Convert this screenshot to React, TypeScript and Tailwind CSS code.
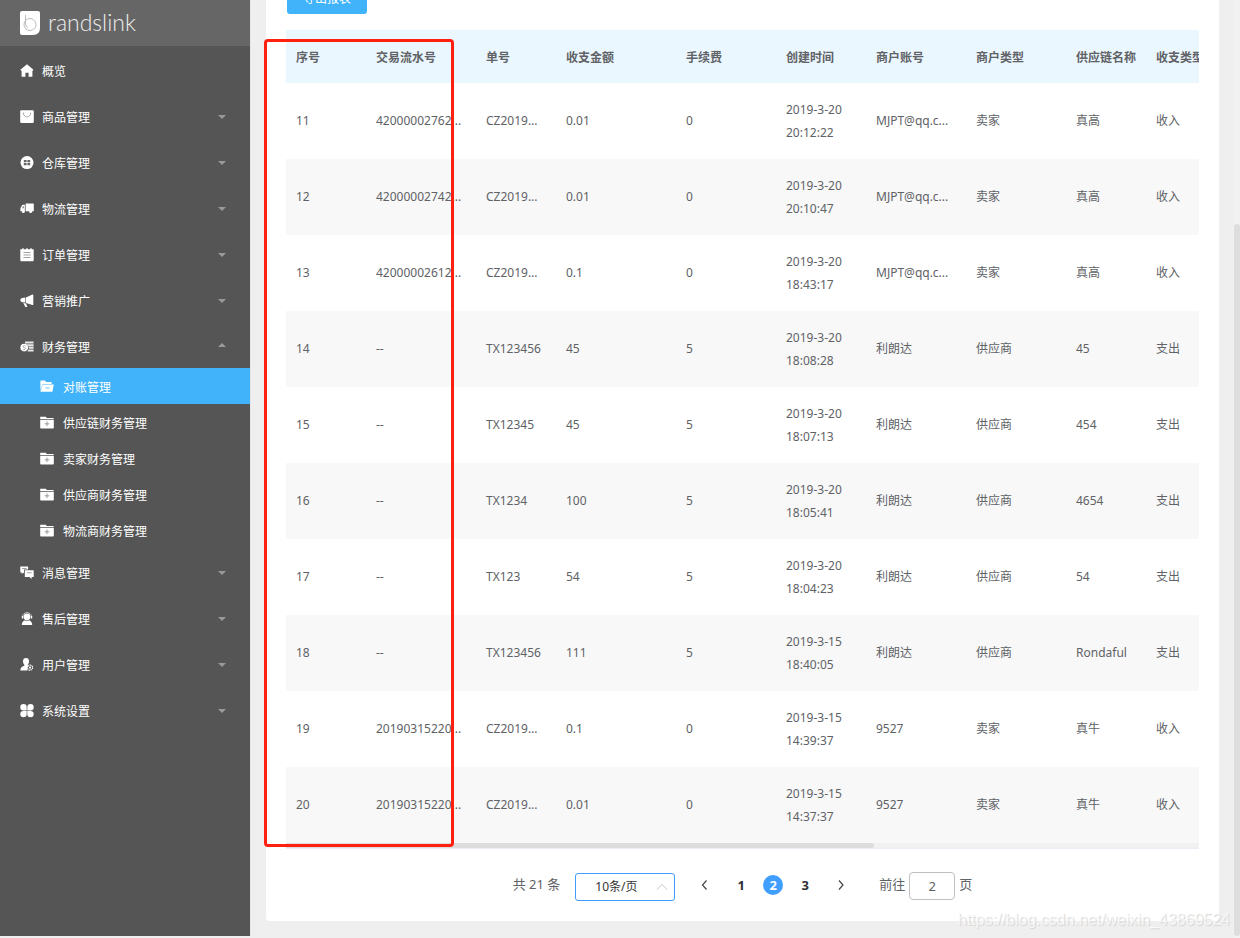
import { useState } from 'react'
import type { ReactNode } from 'react'
import clsx from 'clsx'

type IconName =
  | 'home' | 'goods' | 'store' | 'truck' | 'order' | 'horn' | 'money'
  | 'message' | 'service' | 'user' | 'system' | 'folder' | 'folderOpen'

const ICONS: Record<IconName, ReactNode> = {
  home: <path d="M7 .3 13.4 5.8 12.7 6.8H12.4V12.8H8.6V8.8H5.4V12.8H1.6V6.8H1.1L.4 5.8Z" />,
  goods: (
    <>
      <rect x=".2" y=".2" width="13.6" height="12.8" rx="1.2" />
      <path d="M3.4 3.2C3.8 8.2 10.2 8.2 10.6 3.2" fill="none" stroke="#999" strokeWidth=".8" />
      <circle cx="3.5" cy="3.2" r=".6" fill="#999" />
      <circle cx="10.5" cy="3.2" r=".6" fill="#999" />
    </>
  ),
  store: (
    <>
      <circle cx="7" cy="6.6" r="6.5" />
      <path d="M3.8 4h2.8v2.2H3.8zM7.4 4h2.8v2.2H7.4zM3.8 7h2.8v2.2H3.8zM7.4 7h2.8v2.2H7.4z" fill="#666" />
    </>
  ),
  truck: (
    <>
      <path d="M5.6 1.6h7.6q.6 0 .6.6v7H5.6zM4.9 2.8v6.4H.4V6.2L2 3.3q.3-.5.8-.5z" />
      <path d="M2 6.2 3 4.2h.9v2z" fill="#888" />
      <circle cx="3.3" cy="9.4" r="1.5" />
      <circle cx="10.6" cy="9.4" r="1.5" />
      <path d="M5.2 2v7" stroke="#999" strokeWidth=".4" />
    </>
  ),
  order: (
    <>
      <path d="M.3 1.2h2V.2h1.4v1h2.6V.2h1.4v1h2.6V.2h1.4v1h2v11q0 1-1 1H1.3q-1 0-1-1z" />
      <path d="M3.5 4.5h7M3.5 7h7M3.5 9.5h7" stroke="#999" strokeWidth=".9" />
    </>
  ),
  horn: (
    <>
      <path d="M12.4.5q.9-.2.9.7v9.2q0 .9-.9.6L6 9V3.4zM5.4 3.6v5L2.2 8.3Q.3 7.7.3 6t1.9-2.1z" />
      <path d="M3.3 9 6 9.4l1.3 3q.1.6-.6.6H5.3z" />
    </>
  ),
  money: (
    <>
      <path d="M5 1.6h8.6v2H5zM6.8 4.2h6.8v2H7.9zM8.6 6.8h5v2H8.8zM8.5 9.4h5.1v2H7.4z" opacity=".85" />
      <circle cx="4.2" cy="7.6" r="3.8" />
      <path d="M5.6 6.1Q4.2 5.1 3.2 6.1T4.4 7.6 4.9 9.3 2.8 9" fill="none" stroke="#888" strokeWidth=".7" />
    </>
  ),
  message: (
    <>
      <path d="M.3.4h7.8v3.1H4v3.6H2.9L1.7 8V6.5H.3z" />
      <path d="M4.8 4.2h8.9v6.9h-2l-.2 1.9-2-1.9H4.8z" />
      <path d="M2 2.5h4.6M6.8 6.8h5" stroke="#999" strokeWidth=".9" />
    </>
  ),
  service: (
    <>
      <circle cx="7" cy="4.8" r="3.4" />
      <path d="M2.6 5.6V4.4C2.8-.6 11.2-.6 11.4 4.4v1.2" fill="none" stroke="#ddd" strokeWidth=".8" />
      <path d="M1.8 4.1h1.4v2.5H1.8zM10.8 4.1h1.4v2.5h-1.4zM1.8 13q.1-3.7 3.1-4.8 2.1 1.2 4.2 0 3 1.1 3.1 4.8z" />
    </>
  ),
  user: (
    <>
      <ellipse cx="6" cy="3.5" rx="3" ry="3.4" />
      <path d="M.3 12.5q0-3.6 4-4.8V5.8h3.4v1.6l1.2.5q-2.6 1.7-1.4 4.6z" />
      <circle cx="10" cy="9.6" r="2.6" fill="none" stroke="#fff" strokeWidth="1.1" strokeDasharray="1.5 .5" />
      <circle cx="10" cy="9.6" r="1.1" />
    </>
  ),
  system: (
    <>
      <path d="M3.5 0a3.2 3.2 0 0 1 3.2 3.2v3.2H3.5a3.2 3.2 0 0 1 0-6.4zM10.5 0a3.2 3.2 0 0 1 0 6.4H7.3V3.2A3.2 3.2 0 0 1 10.5 0z" />
      <path d="M3.5 6.9h3.2v3.2a3.2 3.2 0 1 1-3.2-3.2zM7.3 6.9h3.2a3.2 3.2 0 1 1-3.2 3.2z" />
    </>
  ),
  folder: (
    <>
      <path d="M.2.7h5.6l1 1.2h6.8v1.2H.2zM.2 3.7h13.6v8q0 .8-.8.8H1q-.8 0-.8-.8z" />
      <path d="M7 5.4v4.8M4.6 7.8h4.8" stroke="#888" strokeWidth=".8" />
    </>
  ),
  folderOpen: (
    <>
      <path d="M.4 1.2q0-.6.6-.6h4l1 1.4h5.6v2H2.7L.4 10z" />
      <path d="M2.6 4.6h11.2l-1.4 7.2H1q-.6 0-.6-.6z" />
      <path d="M5.5 8h4" stroke="#41b3fb" strokeWidth=".8" />
    </>
  ),
}

function Icon({ name }: { name: IconName }) {
  return (
    <svg viewBox="0 0 14 14" className="size-3.5 shrink-0 fill-white" aria-hidden="true">
      {ICONS[name]}
    </svg>
  )
}

type MenuItem = { label: string; icon: IconName; children?: string[]; leaf?: boolean }

const MENU: MenuItem[] = [
  { label: '概览', icon: 'home', leaf: true },
  { label: '商品管理', icon: 'goods' },
  { label: '仓库管理', icon: 'store' },
  { label: '物流管理', icon: 'truck' },
  { label: '订单管理', icon: 'order' },
  { label: '营销推广', icon: 'horn' },
  {
    label: '财务管理',
    icon: 'money',
    children: ['对账管理', '供应链财务管理', '卖家财务管理', '供应商财务管理', '物流商财务管理'],
  },
  { label: '消息管理', icon: 'message' },
  { label: '售后管理', icon: 'service' },
  { label: '用户管理', icon: 'user' },
  { label: '系统设置', icon: 'system' },
]

const COLUMNS = [
  { title: '序号', width: 'w-[80px]' },
  { title: '交易流水号', width: 'w-[110px]' },
  { title: '单号', width: 'w-[80px]' },
  { title: '收支金额', width: 'w-[120px]' },
  { title: '手续费', width: 'w-[100px]' },
  { title: '创建时间', width: 'w-[90px]' },
  { title: '商户账号', width: 'w-[100px]' },
  { title: '商户类型', width: 'w-[100px]' },
  { title: '供应链名称', width: 'w-[80px]' },
  { title: '收支类型', width: 'w-[100px]' },
]

const ROWS = [
  ['11', '42000002762...', 'CZ2019...', '0.01', '0', '2019-3-20 20:12:22', 'MJPT@qq.c...', '卖家', '真高', '收入'],
  ['12', '42000002742...', 'CZ2019...', '0.01', '0', '2019-3-20 20:10:47', 'MJPT@qq.c...', '卖家', '真高', '收入'],
  ['13', '42000002612...', 'CZ2019...', '0.1', '0', '2019-3-20 18:43:17', 'MJPT@qq.c...', '卖家', '真高', '收入'],
  ['14', '--', 'TX123456', '45', '5', '2019-3-20 18:08:28', '利朗达', '供应商', '45', '支出'],
  ['15', '--', 'TX12345', '45', '5', '2019-3-20 18:07:13', '利朗达', '供应商', '454', '支出'],
  ['16', '--', 'TX1234', '100', '5', '2019-3-20 18:05:41', '利朗达', '供应商', '4654', '支出'],
  ['17', '--', 'TX123', '54', '5', '2019-3-20 18:04:23', '利朗达', '供应商', '54', '支出'],
  ['18', '--', 'TX123456', '111', '5', '2019-3-15 18:40:05', '利朗达', '供应商', 'Rondaful', '支出'],
  ['19', '20190315220...', 'CZ2019...', '0.1', '0', '2019-3-15 14:39:37', '9527', '卖家', '真牛', '收入'],
  ['20', '20190315220...', 'CZ2019...', '0.01', '0', '2019-3-15 14:37:37', '9527', '卖家', '真牛', '收入'],
]

function Sidebar() {
  const [open, setOpen] = useState('财务管理')
  const [active, setActive] = useState('对账管理')

  return (
    <aside className="w-[250px] shrink-0 overflow-hidden bg-[#555] text-xs text-white">
      <div className="flex h-[46px] items-center gap-2 bg-[#666] pl-5">
        <svg viewBox="0 0 20 24" className="h-6 w-5" aria-hidden="true">
          <path d="M2 0h16q2 0 2 2v15q0 7-7 7H2q-2 0-2-2V2q0-2 2-2z" fill="#fff" />
          <circle cx="10" cy="13.5" r="6" fill="none" stroke="#bbb" strokeWidth="1" />
          <path d="M5.5 4v9q.3 3 2.5 3.5" fill="none" stroke="#bbb" strokeWidth="1" />
        </svg>
        <span className="pb-0.5 font-['Lato'] text-[23px] leading-6 font-light text-[#eee]">randslink</span>
      </div>
      <nav>
        {MENU.map((item) => {
          const expanded = open === item.label && !!item.children
          return (
            <div key={item.label}>
              <button
                type="button"
                onClick={() => setOpen(expanded ? '' : item.label)}
                className="flex h-[46px] w-full items-center gap-2 pt-1 pr-6 pl-5 text-left"
              >
                <Icon name={item.icon} />
                <span className="flex-1 pt-0.5">{item.label}</span>
                {!item.leaf && (
                  <svg viewBox="0 0 8 4" className={clsx('h-1 w-2 fill-[#999]', expanded && 'mb-1 rotate-180')}>
                    <path d="M0 0h8L4 4z" />
                  </svg>
                )}
              </button>
              {expanded &&
                item.children!.map((child) => (
                  <button
                    key={child}
                    type="button"
                    onClick={() => setActive(child)}
                    className={clsx(
                      'flex h-9 w-full items-center gap-[9px] pt-0.5 pl-10 text-left',
                      active === child && 'bg-[#41b3fb]',
                    )}
                  >
                    <Icon name={active === child ? 'folderOpen' : 'folder'} />
                    <span className="pt-0.5">{child}</span>
                  </button>
                ))}
            </div>
          )
        })}
      </nav>
    </aside>
  )
}

function Chevron({ d, className }: { d: string; className: string }) {
  return (
    <svg viewBox="0 0 12 12" className={clsx('size-3 fill-none', className)} aria-hidden="true">
      <path d={d} />
    </svg>
  )
}

function Pagination() {
  const [page, setPage] = useState(2)

  return (
    <div className="flex h-[72px] items-center justify-center text-[13px] text-[#606266]">
      <span>共 21 条</span>
      <div className="relative mt-1 ml-[15px]">
        <select
          aria-label="每页条数"
          className="h-7 w-[100px] appearance-none rounded-[3px] border border-[#409eff] bg-white pl-[19px] text-xs text-[#333] outline-none"
        >
          <option>10条/页</option>
          <option>20条/页</option>
        </select>
        <Chevron d="M1 8.5 6 3.5l5 5" className="pointer-events-none absolute top-2 right-[7px] stroke-[#c0c4cc]" />
      </div>
      <button type="button" aria-label="上一页" onClick={() => setPage(Math.max(1, page - 1))} className="ml-6">
        <Chevron d="M7.5 1.5 3.5 6l4 4.5" className="stroke-[#444] stroke-[1.2]" />
      </button>
      <div className="mx-5 flex gap-3">
        {[1, 2, 3].map((n) => (
          <button
            key={n}
            type="button"
            onClick={() => setPage(n)}
            className={clsx(
              'size-5 rounded-full text-center leading-5 font-bold',
              n === page ? 'bg-[#409eff] text-white' : 'text-[#303133]',
            )}
          >
            {n}
          </button>
        ))}
      </div>
      <button type="button" aria-label="下一页" onClick={() => setPage(Math.min(3, page + 1))}>
        <Chevron d="M4 1.5 8 6l-4 4.5" className="stroke-[#444] stroke-[1.2]" />
      </button>
      <label className="ml-8 flex items-center gap-1">
        前往
        <input
          value={page}
          onChange={(e) => setPage(Number(e.target.value) || 1)}
          className="mt-0.5 h-7 w-[46px] rounded-[4px] border border-[#c0c0c0] bg-white text-center text-[#606266] outline-none"
        />
        页
      </label>
    </div>
  )
}

export default function App() {
  return (
    <div className="relative flex h-screen overflow-hidden bg-[#efefef] pb-0.5 font-['Noto_Sans','Noto_Sans_CJK_SC',sans-serif]">
      <Sidebar />
      <main className="min-w-0 flex-1 overflow-hidden border-l border-[#e6e6e6] pr-[21px] pl-[15px]">
        <section className="relative -mt-[18px] rounded-[4px] bg-white px-5">
          <button type="button" className="ml-px h-8 w-20 rounded-[3px] bg-[#41b3fb] pt-0.5 text-xs text-white">
            导出报表
          </button>
          <div className="mt-4 overflow-hidden border-b border-[#ebeef5]">
            <table className="w-full min-w-[960px] table-fixed text-left text-xs text-[#606266]">
              <thead>
                <tr className="h-[53px] bg-[#ebf7ff]">
                  {COLUMNS.map((col) => (
                    <th key={col.title} className={clsx('px-2.5 pt-0.5 font-bold whitespace-nowrap', col.width)}>
                      {col.title}
                    </th>
                  ))}
                </tr>
              </thead>
              <tbody>
                {ROWS.map((row) => (
                  <tr key={row[0]} className="h-[76px] even:bg-[#f8f8f8]">
                    {row.map((cell, i) => (
                      <td key={i} className={clsx('px-2.5 leading-[23px]', i !== 5 && 'pb-0.5 whitespace-nowrap')}>
                        {cell}
                      </td>
                    ))}
                  </tr>
                ))}
              </tbody>
            </table>
            <div className="h-[5px] bg-[#f1f1f1]">
              <div className="h-full w-[588px] rounded-r-full bg-[#ddd]" />
            </div>
          </div>
          <Pagination />
          {/* highlight frame round the first two columns */}
          <div className="pointer-events-none absolute top-[57px] -left-0.5 h-[808px] w-[190px] rounded-[4px] border-3 border-[#ff2010]" />
        </section>
      </main>
      <div className="absolute top-0 right-0 h-full w-1.5 bg-[#f1f1f1] pt-56 pb-0.5">
        <div className="h-full rounded-full bg-[#ddd]" />
      </div>
      <span className="absolute right-2.5 bottom-1.5 font-['Liberation_Sans'] text-base leading-6 text-white/70 [text-shadow:1px_1px_1px_#d4d4d4]">
        https://blog.csdn.net/weixin_43869524
      </span>
    </div>
  )
}
